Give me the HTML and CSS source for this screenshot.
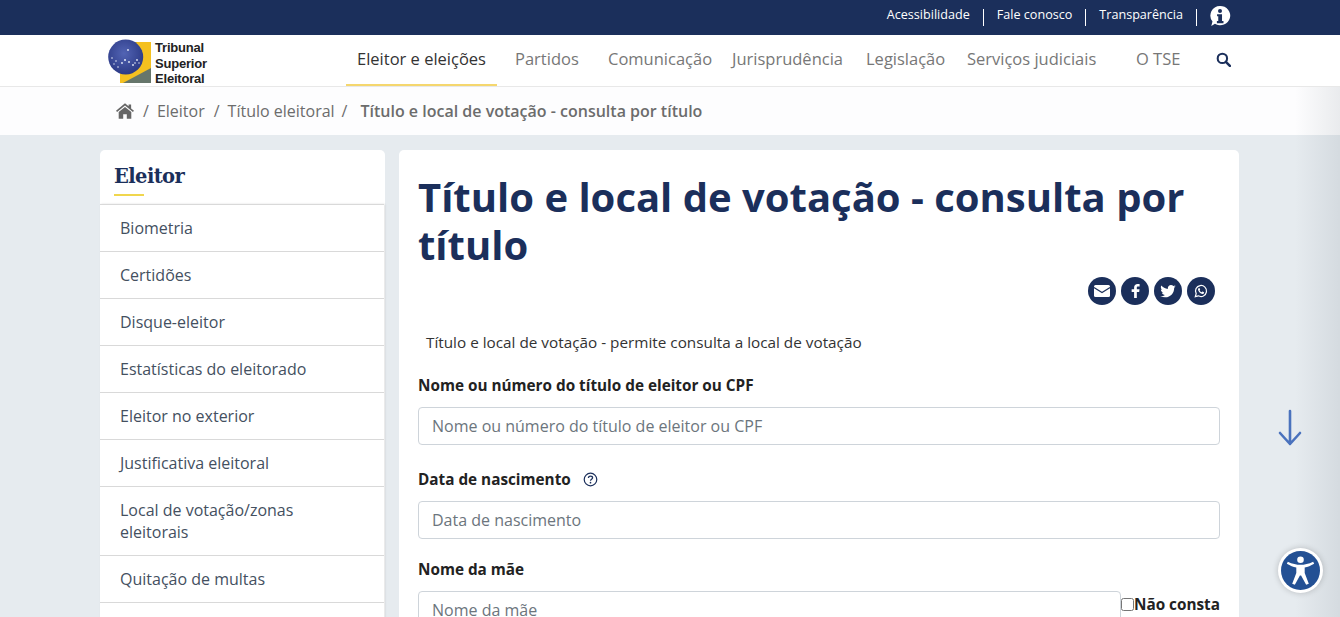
FILE: index.html
```html
<!DOCTYPE html>
<html lang="pt-BR">
<head>
    <meta charset="UTF-8">
    <title>Título e local de votação - consulta por título</title>
    <link rel="stylesheet" href="styles.css">
</head>
<body>
    <div class="top-bar">
        <a href="#">Acessibilidade</a><span class="sep"></span>
        <a href="#">Fale conosco</a><span class="sep"></span>
        <a href="#">Transparência</a><span class="sep"></span>
        <svg class="info-icon" viewBox="0 0 24 24"><path fill="#fff" d="M12 1a11 10.500 0 1 1-5.500 19.500L2.500 23l1.300-5A10.500 10.500 0 0 1 12 1z"/><circle cx="12" cy="6.500" r="2.200" fill="#1b2f5b"/><path fill="#1b2f5b" d="M8.800 10h5.400v7.500h1.600v2.300H8.600v-2.300h1.500v-5.200H8.800z"/></svg>
    </div>

    <header class="main-nav">
        <div class="logo">
            <svg class="logo-mark" viewBox="0 0 46 46">
                <defs>
                    <radialGradient id="globe" cx="45%" cy="40%" r="60%">
                        <stop offset="0" stop-color="#5264b4"/>
                        <stop offset="1" stop-color="#2c3a86"/>
                    </radialGradient>
                </defs>
                <rect x="13" y="3" width="31" height="41" fill="#f4c020"/>
                <path d="M16 44 L44 29 V44 Z" fill="#66766b"/>
                <circle cx="18.700" cy="18" r="17.500" fill="url(#globe)"/>
                <g fill="#e6ebf8">
                    <circle cx="21" cy="11" r=".9"/><circle cx="5" cy="19" r=".8"/><circle cx="9" cy="22" r=".8"/>
                    <circle cx="18" cy="21" r="1"/><circle cx="15" cy="24" r=".9"/><circle cx="26" cy="26" r=".9"/>
                    <circle cx="30" cy="21" r=".9"/><circle cx="11" cy="28" r=".8"/><circle cx="22" cy="23" r=".9"/>
                    <circle cx="28" cy="24" r=".8"/><circle cx="7" cy="25" r=".7"/><circle cx="32" cy="24" r=".7"/>
                </g>
            </svg>
            <div class="logo-text">Tribunal<br>Superior<br>Eleitoral</div>
        </div>
        <nav class="nav-items">
            <a href="#" class="nav-link active">Eleitor e eleições</a>
            <a href="#" class="nav-link w-partidos">Partidos</a>
            <a href="#" class="nav-link w-com">Comunicação</a>
            <a href="#" class="nav-link w-juris">Jurisprudência</a>
            <a href="#" class="nav-link w-leg">Legislação</a>
            <a href="#" class="nav-link w-serv">Serviços judiciais</a>
            <a href="#" class="nav-link w-tse">O TSE</a>
        </nav>
        <svg class="search-icon" viewBox="0 0 16 16"><circle cx="6.800" cy="6.800" r="5" fill="none" stroke="#1b2f5b" stroke-width="2.200"/><path d="M10.500 10.500 L14.800 14.800" stroke="#1b2f5b" stroke-width="2.600" stroke-linecap="round"/></svg>
    </header>

    <div class="breadcrumb">
        <svg class="home-icon" viewBox="0 0 20 17"><path fill="#666" d="M10 0 L14 3.300V1.200h2.800v4.400L20 8.300 18.800 9.700 10 2.500 1.200 9.700 0 8.300z"/><path fill="#666" d="M10 4 L17 9.700V17h-5v-5H8v5H3V9.700z"/></svg>
        <span class="slash">/</span><a href="#">Eleitor</a>
        <span class="slash">/</span><a href="#">Título eleitoral</a>
        <span class="slash last">/</span><strong>Título e local de votação - consulta por título</strong>
    </div>

    <div class="page">
        <aside class="sidebar">
            <div class="sidebar-title"><h2>Eleitor</h2></div>
            <ul class="side-menu">
                <li>Biometria</li>
                <li>Certidões</li>
                <li>Disque-eleitor</li>
                <li>Estatísticas do eleitorado</li>
                <li>Eleitor no exterior</li>
                <li>Justificativa eleitoral</li>
                <li>Local de votação/zonas eleitorais</li>
                <li>Quitação de multas</li>
                <li class="empty"></li>
            </ul>
        </aside>

        <main class="content">
            <h1>Título e local de votação - consulta por título</h1>
            <div class="share">
                <a href="#" class="share-btn"><svg viewBox="0 0 16 12" width="16" height="12"><rect width="16" height="12" rx="1.500" fill="#fff"/><path d="M0 2.500 L8 7.500 L16 2.500" fill="none" stroke="#1b2f5b" stroke-width="1.100"/></svg></a>
                <a href="#" class="share-btn"><svg viewBox="0 0 10 16" width="9" height="14"><path fill="#fff" d="M6.500 16V9h2.700l.4-3H6.500V4.200c0-.9.300-1.400 1.500-1.400h1.700V.2C9.400.1 8.400 0 7.400 0 5 0 3.400 1.400 3.400 4v2H.6v3h2.800v7z"/></svg></a>
                <a href="#" class="share-btn"><svg viewBox="0 0 24 20" width="16" height="13"><path fill="#fff" d="M24 2.400c-.9.400-1.800.7-2.800.8 1-.6 1.800-1.600 2.200-2.700-1 .6-2 1-3.100 1.200C19.300.7 18 0 16.600 0c-2.700 0-4.900 2.200-4.900 4.900 0 .4 0 .8.100 1.100C7.700 5.800 4.100 3.900 1.700.9c-.4.700-.7 1.600-.7 2.500 0 1.700.9 3.200 2.200 4.100-.8 0-1.600-.2-2.200-.6v.1c0 2.400 1.700 4.400 3.900 4.800-.4.100-.8.200-1.300.2-.3 0-.6 0-.9-.1.600 2 2.400 3.400 4.600 3.400-1.700 1.300-3.800 2.100-6.100 2.100-.4 0-.8 0-1.200-.1C2.200 18.300 4.800 19 7.500 19c9.100 0 14-7.500 14-14v-.6c1-.7 1.800-1.500 2.500-2z"/></svg></a>
                <a href="#" class="share-btn"><svg viewBox="0 0 16 16" width="14" height="14"><path fill="none" stroke="#fff" stroke-width="1.400" d="M1.500 14.500l1-3.500A6.300 6.300 0 1 1 5 13.500z"/><path fill="#fff" d="M5.800 4.500c.3 0 .5 0 .6.300l.6 1.400c0 .2 0 .4-.1.500l-.5.600c.6 1 1.400 1.700 2.400 2.200l.6-.7c.2-.2.400-.2.600-.1l1.300.7c.2.100.2.300.2.500-.1 1-.9 1.500-1.800 1.500C7.600 11.300 4.800 8.700 4.600 6.400c0-.9.500-1.900 1.200-1.900z"/></svg></a>
            </div>
            <p class="intro">Título e local de votação - permite consulta a local de votação</p>

            <form>
                <div class="field">
                    <label for="nome">Nome ou número do título de eleitor ou CPF</label>
                    <input type="text" id="nome" placeholder="Nome ou número do título de eleitor ou CPF">
                </div>
                <div class="field tight">
                    <label for="nascimento">Data de nascimento
                        <svg class="help-icon" viewBox="0 0 16 16"><circle cx="8" cy="8" r="6.700" fill="none" stroke="#1b2f5b" stroke-width="1.300"/><path d="M5.800 6.300c0-1.300 1-2 2.200-2s2.200.7 2.200 1.900c0 1.500-2.200 1.500-2.200 3.100" fill="none" stroke="#1b2f5b" stroke-width="1.400"/><circle cx="8" cy="11.400" r=".9" fill="#1b2f5b"/></svg>
                    </label>
                    <input type="text" id="nascimento" placeholder="Data de nascimento">
                </div>
                <div class="field">
                    <label for="mae">Nome da mãe</label>
                    <div class="mother-row">
                        <input type="text" id="mae" placeholder="Nome da mãe">
                        <label class="not-listed"><input type="checkbox">Não consta</label>
                    </div>
                </div>
            </form>
        </main>
    </div>

    <div class="edge-shade"></div>

    <svg class="scroll-arrow" viewBox="0 0 24 38"><path d="M12 2 V35 M2 24 L12 35 L22 24" fill="none" stroke="#4a72bd" stroke-width="2.600" stroke-linecap="round" stroke-linejoin="round"/></svg>

    <a href="#" class="a11y-btn">
        <svg viewBox="0 0 40 40" width="39" height="39">
            <circle cx="20" cy="20" r="20" fill="#235094"/>
            <circle cx="20" cy="9" r="3.400" fill="#fff"/>
            <path fill="#fff" d="M6 13.200 L7 11 C11.500 13.200 16 14.200 20 14.200 S28.500 13.200 33 11 L34 13.200 C30.500 15.300 27.500 16.400 24.300 17 V22.500 L28.500 33.500 L25.800 34.500 L20.600 25 H19.400 L14.200 34.500 L11.500 33.500 L15.700 22.500 V17 C12.500 16.400 9.500 15.300 6 13.200 Z"/>
        </svg>
    </a>
</body>
</html>
```

FILE: styles.css
```css
html, body {
    height: 617px;
    overflow: hidden;
}

body {
    margin: 0;
    background-color: #e6ebef;
    font-family: "Open Sans", Arial, sans-serif;
    color: #333;
}

a {
    color: inherit;
    text-decoration: none;
}

/* top bar */
.top-bar {
    height: 35px;
    box-sizing: border-box;
    background-color: #1b2f5b;
    color: #fff;
    font-size: 12.600px;
    display: flex;
    align-items: center;
    justify-content: flex-end;
    padding: 0 109px 7px 0;
}

.top-bar .sep {
    width: 1px;
    height: 17px;
    background-color: #fff;
    margin: 7px 13px 0 13px;
}

.info-icon {
    width: 22px;
    height: 22px;
    margin: 3px 0 0 -1px;
}

/* main nav */
.main-nav {
    height: 51px;
    background-color: #fff;
    border-bottom: 1px solid #e8e8e8;
    display: flex;
    position: relative;
}

.logo {
    display: flex;
    margin: 4px 0 0 107px;
    width: 250px;
}

.logo-mark {
    width: 46px;
    height: 46px;
}

.logo-text {
    font-family: "Liberation Sans", Arial, sans-serif;
    font-size: 13px;
    line-height: 15.500px;
    font-weight: bold;
    color: #222;
    margin: 1px 0 0 2px;
    letter-spacing: -0.2px;
}

.nav-items {
    display: flex;
    margin-left: -11px;
}

.nav-link {
    display: block;
    box-sizing: border-box;
    height: 51px;
    line-height: 48px;
    font-size: 16.500px;
    color: #777;
    white-space: nowrap;
}

.nav-link.active {
    width: 151px;
    padding-left: 11px;
    color: #333;
    border-bottom: 2px solid #f5d76e;
}

.w-partidos { margin-left: 18px; width: 93px; }
.w-com { width: 124px; }
.w-juris { width: 134px; }
.w-leg { width: 101px; }
.w-serv { width: 169px; }
.w-tse { width: 81px; }

.search-icon {
    width: 15px;
    height: 15px;
    margin: 17px 0 0 -1px;
}

/* breadcrumb */
.breadcrumb {
    height: 48px;
    background-color: #fdfdfe;
    display: flex;
    align-items: center;
    padding-left: 116px;
    font-size: 16px;
    color: #6c6c6c;
}

.home-icon {
    width: 18px;
    height: 16px;
}

.slash {
    margin: 0 8px 0 9px;
}

.slash.last {
    margin-left: 7px;
}

.breadcrumb strong {
    margin-left: 5px;
    font-weight: 600;
}

/* page columns */
.page {
    display: flex;
    padding: 15px 0 0 100px;
    gap: 14px;
    align-items: flex-start;
}

.sidebar {
    width: 285px;
    background-color: #fff;
    border-radius: 5px 5px 0 0;
}

.sidebar-title {
    height: 54px;
    box-sizing: border-box;
    padding: 12px 0 0 14px;
}

.sidebar-title h2 {
    margin: 0;
    font-family: "DejaVu Serif", Georgia, serif;
    font-size: 19.500px;
    line-height: 29px;
    font-weight: bold;
    color: #1b2f5b;
    display: inline-block;
    letter-spacing: -0.6px;
}

.sidebar-title h2::after {
    content: "";
    display: block;
    width: 30px;
    height: 2px;
    margin-top: 3px;
    background-color: #f0d64e;
}

.side-menu {
    list-style: none;
    margin: 0;
    padding: 0;
    border-top: 1px solid #d9d9d9;
    width: 284px;
    box-shadow: 1px 0 2px rgba(0, 0, 0, 0.12);
    font-size: 16px;
    line-height: 22px;
    color: #44505f;
}

.side-menu li {
    padding: 12px 60px 12px 20px;
    border-bottom: 1px solid #d9d9d9;
}

.side-menu li.empty {
    height: 22px;
}

.content {
    width: 840px;
    box-sizing: border-box;
    height: 600px;
    padding: 23px 19px 0;
    background-color: #fff;
    border-radius: 5px 5px 0 0;
}

.content h1 {
    margin: 0;
    font-size: 40px;
    line-height: 48px;
    font-weight: 700;
    color: #1b2f5b;
}

.share {
    display: flex;
    justify-content: flex-end;
    gap: 5px;
    padding-right: 5px;
    margin-top: 8px;
}

.share-btn {
    width: 28px;
    height: 28px;
    border-radius: 50%;
    background-color: #1b2f5b;
    display: flex;
    align-items: center;
    justify-content: center;
}

.intro {
    margin: 26px 0 0 8px;
    font-size: 15.300px;
    line-height: 22px;
    color: #333;
}

form {
    margin-top: 21px;
}

.field {
    margin-bottom: 23px;
}

.field.tight {
    margin-bottom: 19px;
}

.field > label {
    display: flex;
    align-items: center;
    gap: 12px;
    font-size: 15.300px;
    font-weight: 700;
    line-height: 22px;
    color: #222;
    margin-bottom: 11px;
}

.help-icon {
    width: 15px;
    height: 15px;
}

.field input[type="text"] {
    display: block;
    box-sizing: border-box;
    width: 100%;
    height: 38px;
    padding: 0 13px;
    border: 1px solid #ced4da;
    border-radius: 4px;
    font-family: inherit;
    font-size: 16px;
    color: #333;
}

.field input::placeholder {
    color: #6c757d;
}

.mother-row {
    display: flex;
    align-items: flex-start;
}

.mother-row input[type="text"] {
    width: 703px;
    flex: none;
}

.not-listed {
    display: flex;
    align-items: center;
    padding-top: 3px;
    font-size: 15.300px;
    font-weight: 700;
    color: #222;
    white-space: nowrap;
}

.not-listed input {
    margin: 0;
    width: 13px;
    height: 13px;
}

/* floating stuff */
.edge-shade {
    position: absolute;
    top: 87px;
    right: 0;
    width: 45px;
    height: 530px;
    background: linear-gradient(to right, rgba(60, 75, 90, 0), rgba(60, 75, 90, 0.1));
}

.scroll-arrow {
    position: absolute;
    left: 1278px;
    top: 409px;
    width: 24px;
    height: 38px;
}

.a11y-btn {
    position: absolute;
    left: 1278px;
    top: 548px;
    width: 39px;
    height: 39px;
    padding: 3px;
    border-radius: 50%;
    background-color: #fff;
    box-shadow: 0 0 6px rgba(0, 0, 0, 0.2);
}
```
